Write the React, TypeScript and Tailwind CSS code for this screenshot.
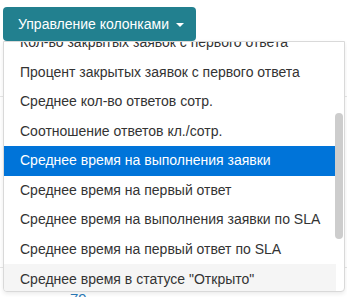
const items = [
  "Кол-во закрытых заявок с первого ответа",
  "Процент закрытых заявок с первого ответа",
  "Среднее кол-во ответов сотр.",
  "Соотношение ответов кл./сотр.",
  "Среднее время на выполнения заявки",
  "Среднее время на первый ответ",
  "Среднее время на выполнения заявки по SLA",
  "Среднее время на первый ответ по SLA",
  'Среднее время в статусе "Открыто"',
];

const ACTIVE = 4;
const HOVER = 8;

export default function App() {
  return (
    <div className="relative w-[347px] h-[297px] overflow-hidden bg-white font-['Liberation_Sans',Arial,sans-serif]">
      {/* table behind the menu */}
      <div className="flex flex-col">
        <div className="h-[97px] border-b border-[#e6e6e6]" />
        <div className="h-[171px] border-b border-[#e6e6e6]" />
        <div className="h-[29px] pl-[70px] pt-[22px] text-[15px] leading-[18px] text-[#2a7ab8]">79</div>
      </div>

      {/* dropdown */}
      <div className="absolute left-[3px] top-[7px]">
        <button className="relative z-10 flex h-[34px] items-center rounded-[4px] bg-[#22808f] pl-[15px] pr-[12px] text-[14px] text-white">
          Управление колонками
          <span className="ml-[7px] mt-[2px] h-0 w-0 border-x-[4px] border-t-[4px] border-x-transparent border-t-white" />
        </button>

        <div className="absolute left-0 top-[34px] h-[251px] w-[342px] overflow-hidden rounded-b-[4px] border border-[#d9d9d9] bg-white shadow-[0_2px_4px_rgba(0,0,0,0.08)]">
          <div className="mt-[-14.4px] w-[332px]">
            {items.map((label, i) => (
              <div
                key={label}
                className={
                  "flex h-[29.6px] items-center whitespace-nowrap pl-[16px] text-[14px] " +
                  (i === ACTIVE
                    ? "bg-[#0074d9] text-white"
                    : i === HOVER
                      ? "bg-[#f5f5f5] text-[#333]"
                      : "text-[#333]")
                }
              >
                {label}
              </div>
            ))}
          </div>
          {/* scrollbar thumb */}
          <div className="absolute right-[1px] top-[71px] h-[126px] w-[8px] rounded-full bg-[#cdcdcd]" />
        </div>
      </div>
    </div>
  );
}
